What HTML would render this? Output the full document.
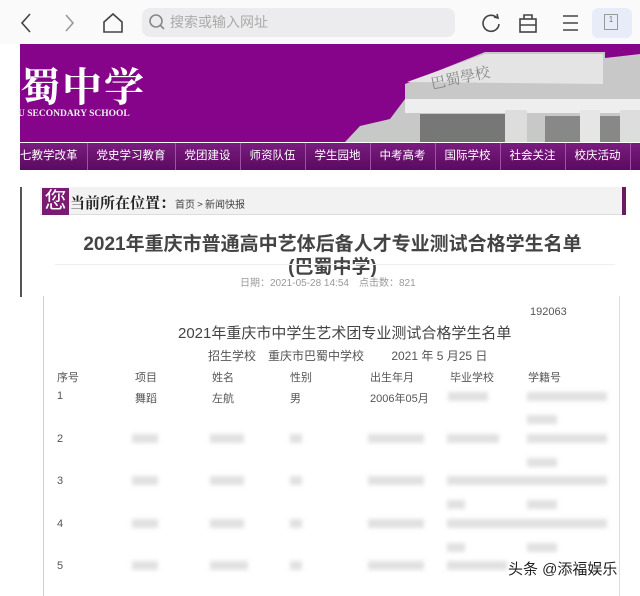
<!DOCTYPE html>
<html><head><meta charset="utf-8"><style>
*{margin:0;padding:0;box-sizing:border-box}
body{width:640px;height:591px;overflow:hidden;background:#fff;font-family:"Liberation Sans","Noto Sans CJK SC",sans-serif;position:relative}
.a{position:absolute}
.bar{left:0;top:0;width:640px;height:44px;background:#fafafa}
.search{left:142px;top:8px;width:313px;height:29px;background:#ececee;border-radius:8px;color:#aaa;font-size:14px;line-height:29px;padding-left:28px}
.banner{left:20px;top:44px;width:620px;height:98px;background:#86048a}
.nav{left:20px;top:143px;width:620px;height:27px;background:linear-gradient(#7a1c80,#5a0a60);color:#fff;font-size:11.5px;line-height:27px;white-space:nowrap;overflow:hidden}
.nav span{display:inline-block;padding:0 9px;border-right:1px solid #a050a5}
.t{color:#555;font-size:11px}
.blur{background:#ccc;filter:blur(2px);opacity:.6;height:9px}
</style></head><body>
<div class="a bar"></div>
<svg class="a" style="left:18px;top:12px" width="600" height="22" fill="none" stroke="#444" stroke-width="1.6">
<path d="M12 2 L4 11 L12 20"/><path d="M48 3 L55 11 L48 19" stroke="#999"/>
<path d="M86 10 L95 2 L104 10 L104 20 L86 20Z"/>
<path d="M479 6 A8 8 0 1 0 481 12"/><path d="M476 5 L480 6 L479 2"/>
<rect x="502" y="7" width="16" height="13"/><path d="M506 7 V3 H514 V7 M502 13 H518"/>
<path d="M545 4 H560 M545 11 H560 M545 18 H560"/>
</svg>
<div class="a" style="left:592px;top:8px;width:40px;height:30px;background:#e8ecf8;border-radius:6px"></div>
<div class="a" style="left:604px;top:14px;width:14px;height:16px;border:1px solid #999;font-size:8px;color:#777;text-align:center">1</div>
<div class="a search">搜索或输入网址</div>
<svg class="a" style="left:148px;top:13px" width="18" height="18" fill="none" stroke="#888" stroke-width="1.6"><circle cx="8" cy="8" r="6"/><path d="M12 12 L16 16"/></svg>
<div class="a banner"></div>
<div class="a" style="left:20px;top:56px;color:#fff;font-size:40px;font-family:'Noto Serif CJK SC',serif;font-weight:bold;letter-spacing:2px">蜀中学</div>
<div class="a" style="left:18px;top:109px;color:#eee;font-size:9.5px;font-family:'Liberation Serif',serif;font-weight:bold">U SECONDARY SCHOOL</div>
<svg class="a" style="left:345px;top:44px" width="295" height="98">
<polygon points="0,98 15,82 45,75 60,55 60,40 140,8 260,8 260,14 295,10 295,98" fill="#c8c8c8"/>
<polygon points="62,38 140,10 258,10 258,40" fill="#e4e4e4"/>
<rect x="60" y="55" width="235" height="14" fill="#eee"/>
<rect x="75" y="70" width="90" height="28" fill="#777"/>
<rect x="200" y="72" width="90" height="26" fill="#888"/>
<rect x="160" y="66" width="22" height="32" fill="#ddd"/><rect x="235" y="66" width="20" height="32" fill="#e6e6e6"/><rect x="275" y="66" width="20" height="32" fill="#ddd"/>
<text x="85" y="38" font-size="15" fill="#888" font-family="Noto Serif CJK SC" transform="rotate(-12 120 32)">巴蜀學校</text>
</svg>
<div class="a nav"><span style="padding-left:0">七教学改革</span><span>党史学习教育</span><span>党团建设</span><span>师资队伍</span><span>学生园地</span><span>中考高考</span><span>国际学校</span><span>社会关注</span><span>校庆活动</span></div>
<div class="a" style="left:20px;top:187px;width:2px;height:110px;background:#555"></div>
<div class="a" style="left:40px;top:187px;width:585px;height:28px;background:#f2f2f2;border-bottom:1px solid #ddd"></div>
<div class="a" style="left:622px;top:187px;width:4px;height:28px;background:#6a1a60"></div>
<div class="a" style="left:42px;top:188px;width:27px;height:27px;background:#7a1a70;color:#fff;font-size:22px;line-height:26px;text-align:center">您</div>
<div class="a" style="left:70px;top:192px;font-size:15px;font-weight:bold;font-family:'Noto Serif CJK SC',serif;color:#222">当前所在位置：<span style="font-size:10px;font-weight:normal;color:#444;font-family:'Noto Sans CJK SC',sans-serif">首页 > 新闻快报</span></div>
<div class="a" style="left:45px;top:233px;width:575px;text-align:center;font-size:19px;font-weight:bold;color:#444;line-height:23px">2021年重庆市普通高中艺体后备人才专业测试合格学生名单<br>(巴蜀中学)</div>
<div class="a" style="left:55px;top:264px;width:560px;height:1px;background:#eee"></div>
<div class="a" style="left:240px;top:274px;font-size:10px;color:#999">日期：2021-05-28 14:54　点击数：821</div>
<div class="a" style="left:43px;top:296px;width:577px;height:300px;border-left:1px solid #ccc;border-right:1px solid #ddd"></div>
<div class="a t" style="left:530px;top:306px">192063</div>
<div class="a" style="left:178px;top:322px;font-size:15px;color:#444">2021年重庆市中学生艺术团专业测试合格学生名单</div>
<div class="a t" style="left:208px;top:347px;font-size:12px">招生学校　重庆市巴蜀中学校　　 2021 年 5 月25 日</div>
<div class="a t" style="left:57px;top:369px">序号</div><div class="a t" style="left:135px;top:369px">项目</div><div class="a t" style="left:212px;top:369px">姓名</div><div class="a t" style="left:290px;top:369px">性别</div><div class="a t" style="left:370px;top:369px">出生年月</div><div class="a t" style="left:450px;top:369px">毕业学校</div><div class="a t" style="left:528px;top:369px">学籍号</div>
<div class="a t" style="left:57px;top:390px">1</div><div class="a t" style="left:135px;top:390px">舞蹈</div><div class="a t" style="left:212px;top:390px">左航</div><div class="a t" style="left:290px;top:390px">男</div><div class="a t" style="left:370px;top:390px">2006年05月</div>
<div class="a blur" style="left:448px;top:392px;width:40px"></div><div class="a blur" style="left:527px;top:392px;width:80px"></div><div class="a blur" style="left:527px;top:415px;width:30px"></div>
<div class="a t" style="left:57px;top:433px">2</div><div class="a t" style="left:57px;top:475px">3</div><div class="a t" style="left:57px;top:518px">4</div><div class="a t" style="left:57px;top:560px">5</div>
<div class="a blur" style="left:132px;top:434px;width:26px"></div><div class="a blur" style="left:210px;top:434px;width:34px"></div><div class="a blur" style="left:290px;top:434px;width:12px"></div><div class="a blur" style="left:368px;top:434px;width:56px"></div><div class="a blur" style="left:447px;top:434px;width:52px"></div><div class="a blur" style="left:527px;top:434px;width:80px"></div><div class="a blur" style="left:527px;top:458px;width:30px"></div>
<div class="a blur" style="left:132px;top:476px;width:26px"></div><div class="a blur" style="left:210px;top:476px;width:34px"></div><div class="a blur" style="left:290px;top:476px;width:12px"></div><div class="a blur" style="left:368px;top:476px;width:56px"></div><div class="a blur" style="left:447px;top:476px;width:160px"></div><div class="a blur" style="left:447px;top:500px;width:18px"></div><div class="a blur" style="left:527px;top:500px;width:30px"></div>
<div class="a blur" style="left:132px;top:519px;width:26px"></div><div class="a blur" style="left:210px;top:519px;width:34px"></div><div class="a blur" style="left:290px;top:519px;width:12px"></div><div class="a blur" style="left:368px;top:519px;width:56px"></div><div class="a blur" style="left:447px;top:519px;width:160px"></div><div class="a blur" style="left:447px;top:543px;width:18px"></div><div class="a blur" style="left:527px;top:543px;width:30px"></div>
<div class="a blur" style="left:132px;top:561px;width:26px"></div><div class="a blur" style="left:210px;top:561px;width:38px"></div><div class="a blur" style="left:290px;top:561px;width:12px"></div><div class="a blur" style="left:368px;top:561px;width:56px"></div><div class="a blur" style="left:447px;top:561px;width:60px"></div>
<div class="a" style="left:508px;top:558px;font-size:15px;color:#222;text-shadow:0 0 2px #fff">头条 @添福娱乐</div>
</body></html>
